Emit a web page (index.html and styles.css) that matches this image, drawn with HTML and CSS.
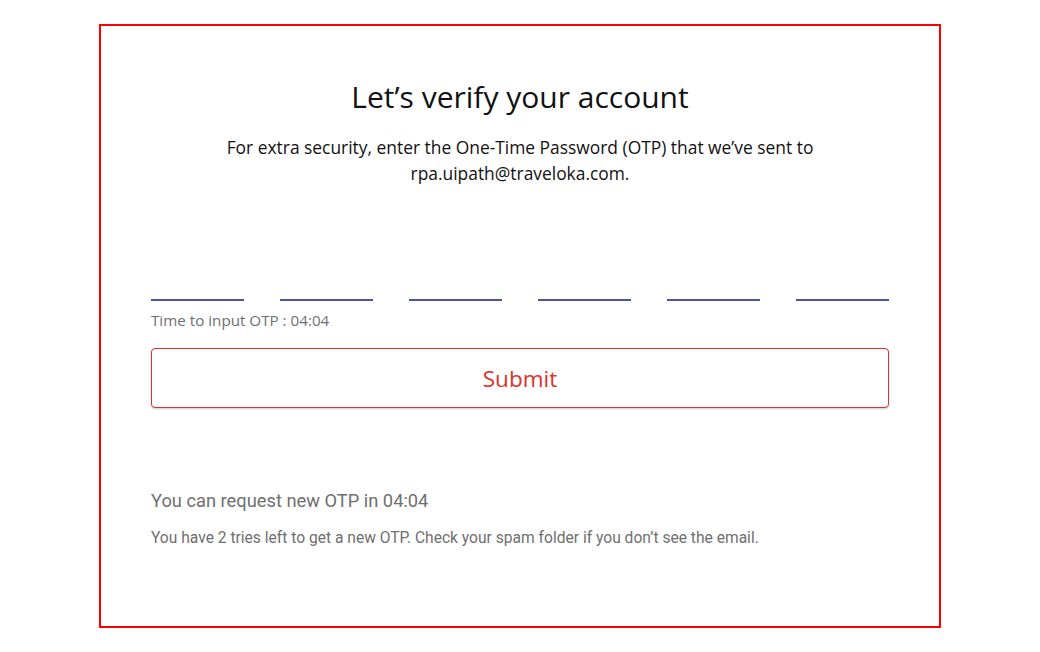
FILE: index.html
```html
<!DOCTYPE html>
<html>
<head>
<meta charset="utf-8">
<link rel="stylesheet" href="styles.css">
</head>
<body>
<div class="card">
  <h1 class="title">Let’s verify your account</h1>
  <p class="lead">For extra security, enter the One-Time Password (OTP) that we’ve sent to<br>rpa.uipath@traveloka.com.</p>
  <div class="otp">
    <span class="digit"></span>
    <span class="digit"></span>
    <span class="digit"></span>
    <span class="digit"></span>
    <span class="digit"></span>
    <span class="digit"></span>
  </div>
  <div class="timer">Time to input OTP : 04:04</div>
  <button class="submit">Submit</button>
  <div class="resend">You can request new OTP in 04:04</div>
  <div class="tries">You have 2 tries left to get a new OTP. Check your spam folder if you don’t see the email.</div>
</div>
</body>
</html>
```
FILE: styles.css
```css
html, body { margin: 0; padding: 0; background: #fff; }
body { padding-top: 24px; font-family: "Open Sans", "Noto Sans", sans-serif; }
.card {
  width: 842px;
  height: 604px;
  box-sizing: border-box;
  margin: 0 auto;
  border: 2px solid #ff0000;
  padding: 53px 50px 0 50px;
  display: flex;
  flex-direction: column;
}
.title {
  margin: 0;
  text-align: center;
  font-weight: 400;
  font-size: 30px;
  line-height: 36px;
  color: #111;
}
.lead {
  margin: 19px 0 0;
  text-align: center;
  font-size: 17.4px;
  line-height: 26px;
  color: #111;
}
.otp {
  margin-top: 85px;
  display: grid;
  grid-template-columns: repeat(6, 1fr);
  column-gap: 36px;
}
.digit {
  display: block;
  height: 28px;
  border-bottom: 2px solid #4d51a8;
}
.timer {
  margin-top: 10px;
  font-size: 15.2px;
  line-height: 18px;
  color: #6f6f6f;
}
.submit {
  margin-top: 19px;
  height: 60px;
  width: 100%;
  background: #fff;
  border: 1px solid #e0302a;
  border-radius: 4px;
  box-shadow: 0 1px 2px rgba(0,0,0,0.2);
  color: #e0302a;
  font-family: inherit;
  font-size: 22.5px;
  cursor: pointer;
}
.resend {
  margin-top: 81px;
  font-family: "Roboto", sans-serif;
  font-size: 18.3px;
  line-height: 24px;
  color: #6f6f6f;
}
.tries {
  margin-top: 16px;
  font-family: "Roboto", sans-serif;
  font-size: 15.6px;
  line-height: 18px;
  color: #6f6f6f;
}
```
